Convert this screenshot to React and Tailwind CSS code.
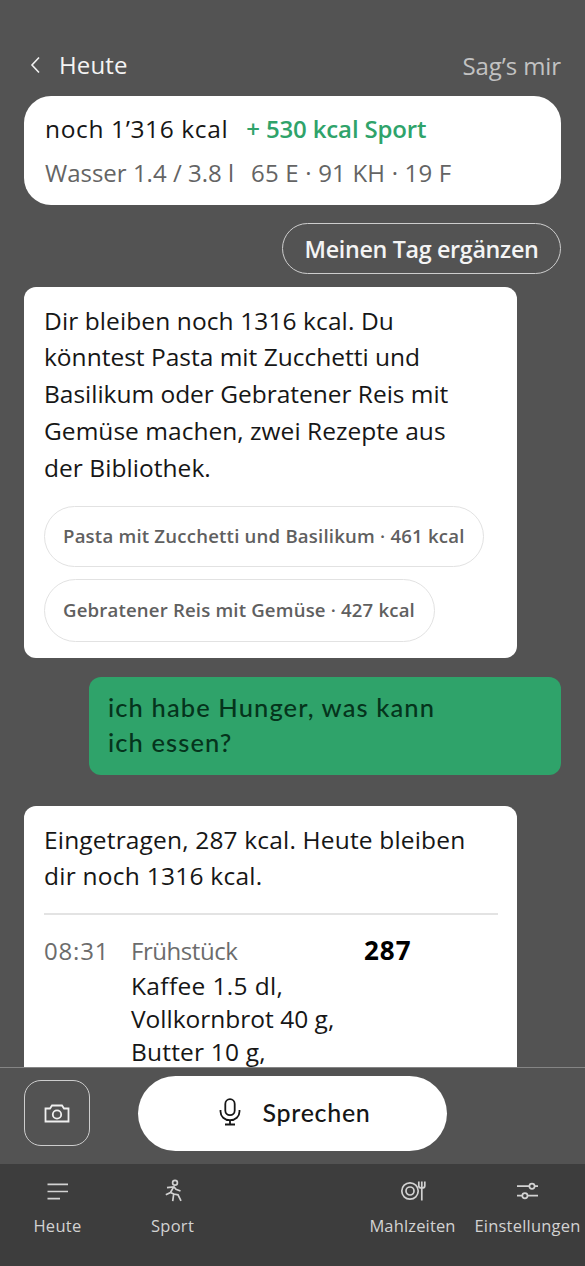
const SANS = "font-['Open_Sans',sans-serif]";

function Line({ className = "", children }) {
  return <div className={`whitespace-nowrap ${className}`}>{children}</div>;
}

function ChevronIcon() {
  return (
    <svg className="h-[18px] w-[12px]" viewBox="0 0 12 18" fill="none" stroke="#f2f2f2" strokeWidth="1.6">
      <path d="M10 1.5 3 9l7 7.500" />
    </svg>
  );
}

function CameraIcon() {
  return (
    <svg className="mt-[2px] h-[20px] w-[26px]" viewBox="0 0 26 20" fill="none" stroke="#f0f0f0" strokeWidth="1.8">
      <path d="M1.500 4.500H6L8 1.500h10l2 3h4.500v13h-23z" />
      <circle cx="13" cy="10.500" r="4.200" />
    </svg>
  );
}

function MicIcon() {
  return (
    <svg className="-mt-[2px] h-[28px] w-[22px]" viewBox="0 0 22 28" fill="none" stroke="#161616" strokeWidth="1.8">
      <rect x="6.300" y="1.200" width="9.400" height="16" rx="4.700" />
      <path d="M1.500 12v1.500c0 5 4 8.700 9.500 8.700s9.500-3.700 9.500-8.700V12M11 22.200v4M6 26.500h10" />
    </svg>
  );
}

function ListIcon() {
  return (
    <svg className="h-[24px] w-[24px]" viewBox="0 0 24 24" fill="none" stroke="#d2d2d2" strokeWidth="1.7">
      <path d="M1.500 5.300h20.500M1.500 12.500h20.500M1.500 19.700h12.500" />
    </svg>
  );
}

function RunIcon() {
  return (
    <svg className="h-[24px] w-[24px]" viewBox="0 0 24 24" fill="none" stroke="#d2d2d2" strokeWidth="1.7">
      <circle cx="14" cy="3.700" r="2.400" />
      <path d="M6 8.700 13 8l2 2.200 4.500 1.800M12.500 8.200 9.500 13.500 4.800 15.800M9.500 13.500l3.200 1.500-1 7.200M12.700 15l4.300.8 3 6" />
    </svg>
  );
}

function MealIcon() {
  return (
    <svg className="h-[24px] w-[26px]" viewBox="0 0 26 24" fill="none" stroke="#d2d2d2" strokeWidth="1.7">
      <circle cx="10" cy="12" r="8.200" />
      <circle cx="10" cy="12" r="4" />
      <path d="M18.800 2.500v4.500q0 2 3 2t3-2V2.500M21.800 2.500V21.500" />
    </svg>
  );
}

function SlidersIcon() {
  return (
    <svg className="h-[24px] w-[24px]" viewBox="0 0 24 24" fill="none" stroke="#d2d2d2" strokeWidth="1.7">
      <path d="M1 7.200h12.500M18.500 7.200h3.500M1 16.700h5M11.700 16.700h10.300" />
      <circle cx="16" cy="7.200" r="2.600" />
      <circle cx="8.900" cy="16.700" r="2.600" />
    </svg>
  );
}

function NavItem({ icon, label, tracking }) {
  return (
    <div className="flex flex-col items-center pt-[15px]">
      {icon}
      <span className={`mt-[11px] text-[16.5px] leading-6 font-medium whitespace-nowrap text-[#d2d2d2] ${tracking}`}>{label}</span>
    </div>
  );
}

export default function App() {
  return (
    <div className={`flex h-[1266px] w-[585px] flex-col overflow-hidden bg-[#535353] text-[#161616] ${SANS}`}>
      <header className="flex h-[96px] shrink-0 items-start justify-between pt-[48px] pr-[24px] pl-[29px]">
        <div className="flex items-center gap-[18px]">
          <ChevronIcon />
          <span className="text-[24px] leading-[34px] tracking-[0.15px] text-[#f4f4f4]">Heute</span>
        </div>
        <span className="mt-[1px] text-[24px] leading-[34px] tracking-[-0.1px] text-[#c2c2c2]">Sag’s mir</span>
      </header>

      <main className="flex min-h-0 grow flex-col overflow-hidden px-[24px]">
        <section className="h-[109px] shrink-0 rounded-[27px] bg-white pt-[11px] pl-[21px]">
          <Line className="flex gap-[18px] leading-[44px]">
            <span className="text-[24.5px] tracking-[0.63px]">noch 1’316 kcal</span>
            <span className="text-[24px] font-semibold tracking-[-0.15px] text-[#2fa36a]">+ 530 kcal Sport</span>
          </Line>
          <Line className="flex gap-[17px] text-[24px] leading-[44px] text-[#646464]">
            <span>Wasser 1.4 / 3.8 l</span>
            <span className="tracking-[0.2px]">65 E · 91 KH · 19 F</span>
          </Line>
        </section>

        <button className="mt-[18px] flex h-[51px] w-[279px] shrink-0 items-center justify-center self-end rounded-full border-[1.5px] border-[#cdcdcd] pt-[2px] text-[23.3px] font-semibold tracking-[-0.33px] whitespace-nowrap text-[#f4f4f4]">
          Meinen Tag ergänzen
        </button>

        <section className="mt-[13px] h-[371px] w-[493px] shrink-0 rounded-[12px] bg-white px-[20px] pt-[15.500px]">
          <div className="text-[24.5px] leading-[36.8px]">
            <Line className="tracking-[0.1px]">Dir bleiben noch 1316 kcal. Du</Line>
            <Line>könntest Pasta mit Zucchetti und</Line>
            <Line className="tracking-[-0.02px]">Basilikum oder Gebratener Reis mit</Line>
            <Line className="tracking-[0.03px]">Gemüse machen, zwei Rezepte aus</Line>
            <Line className="tracking-[0.05px]">der Bibliothek.</Line>
          </div>
          <div className="mt-[19.500px] flex flex-col items-start gap-[12px] text-[18.6px] font-semibold text-[#5f6060]">
            <button className="flex h-[61px] w-[440px] items-center rounded-full border-[1.5px] border-[#e2e2e2] pb-[2px] pl-[18px] tracking-[0.2px] whitespace-nowrap">
              Pasta mit Zucchetti und Basilikum · 461 kcal
            </button>
            <button className="flex h-[63px] w-[391px] items-center rounded-full border-[1.5px] border-[#e2e2e2] pb-[2px] pl-[18px] tracking-[0.17px] whitespace-nowrap">
              Gebratener Reis mit Gemüse · 427 kcal
            </button>
          </div>
        </section>

        <section className="mt-[19px] h-[98px] w-[472px] shrink-0 self-end rounded-[12px] bg-[#2fa36a] pt-[13px] pl-[19px] font-['Lato',sans-serif] text-[25.5px] leading-[35px] font-medium text-[#05341c]">
          <Line className="tracking-[1.1px]">ich habe Hunger, was kann</Line>
          <Line className="tracking-[1.1px]">ich essen?</Line>
        </section>

        <section className="mt-[31px] h-[320px] w-[493px] shrink-0 rounded-[12px] bg-white px-[20px] pt-[16px]">
          <div className="text-[24.5px] leading-[36px]">
            <Line className="tracking-[0.17px]">Eingetragen, 287 kcal. Heute bleiben</Line>
            <Line className="tracking-[0.25px]">dir noch 1316 kcal.</Line>
          </div>
          <div className="mt-[19px] h-[2px] w-[454px] bg-[#e3e3e3]" />
          <div className="mt-[19px] grid grid-cols-[87px_233px_1fr] text-[24px] leading-[34px]">
            <span className="tracking-[0.8px] text-[#6c6c6c]">08:31</span>
            <div>
              <Line className="tracking-[-0.45px] text-[#6c6c6c]">Frühstück</Line>
              <div className="pt-[1px] text-[24.5px] leading-[33px]">
                <Line className="tracking-[0.35px]">Kaffee 1.5 dl,</Line>
                <Line>Vollkornbrot 40 g,</Line>
                <Line className="tracking-[0.2px]">Butter 10 g,</Line>
              </div>
            </div>
            <span className="text-[26px] leading-[32px] font-bold tracking-[1px] text-black">287</span>
          </div>
        </section>
      </main>

      <div className="flex h-[97px] shrink-0 items-start border-t border-[#858585] pl-[24px]">
        <button className="mt-[12px] flex size-[66px] items-center justify-center rounded-[17px] border-[1.5px] border-[#cdcdcd]">
          <CameraIcon />
        </button>
        <button className="mt-[8px] ml-[48px] flex h-[75px] w-[309px] items-center justify-center gap-[21px] rounded-full bg-white pb-[1px] pl-[5px] font-['Lato',sans-serif] text-[25px] font-medium tracking-[0.7px]">
          <MicIcon />
          Sprechen
        </button>
      </div>

      <nav className="grid h-[102px] shrink-0 grid-cols-[115px_115px_125px_115px_115px] bg-[#3d3d3d]">
        <NavItem icon={<ListIcon />} label="Heute" tracking="tracking-[0.3px]" />
        <NavItem icon={<RunIcon />} label="Sport" tracking="tracking-[0.3px]" />
        <div />
        <NavItem icon={<MealIcon />} label="Mahlzeiten" tracking="tracking-[0.15px]" />
        <NavItem icon={<SlidersIcon />} label="Einstellungen" tracking="tracking-[0.2px]" />
      </nav>
    </div>
  );
}
